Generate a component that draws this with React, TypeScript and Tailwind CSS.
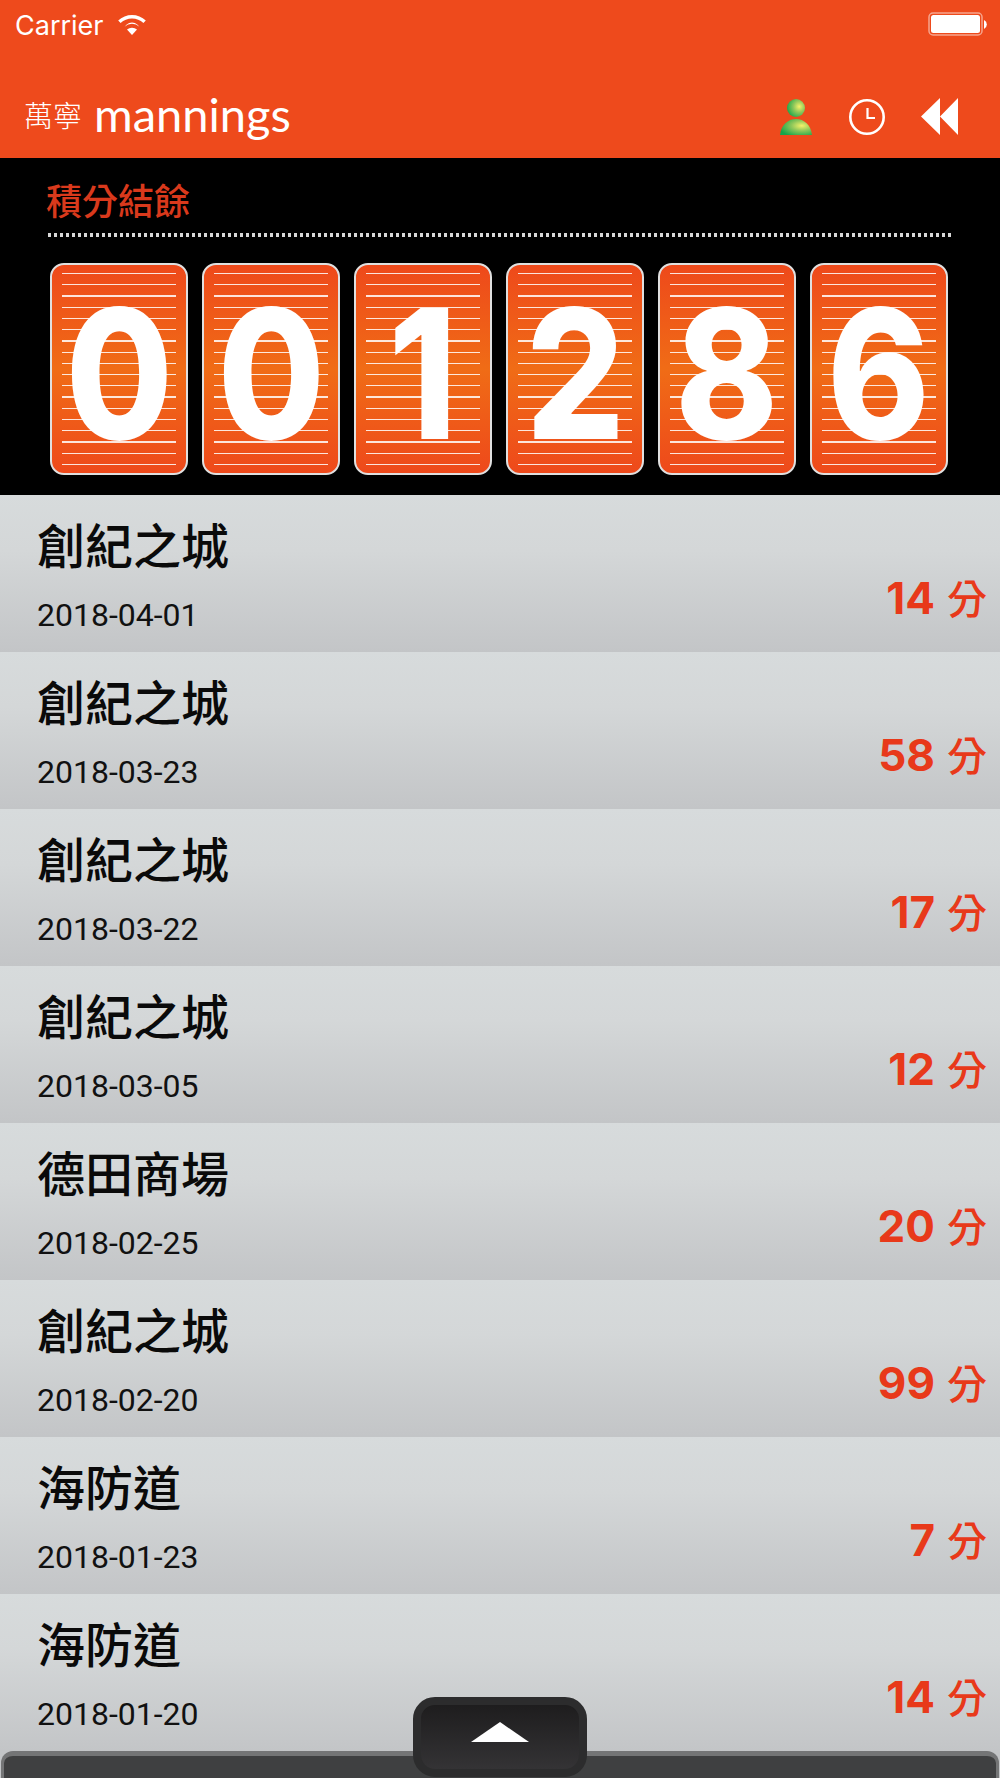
import React from "react";

const records = [
  { place: "創紀之城", date: "2018-04-01", points: 14 },
  { place: "創紀之城", date: "2018-03-23", points: 58 },
  { place: "創紀之城", date: "2018-03-22", points: 17 },
  { place: "創紀之城", date: "2018-03-05", points: 12 },
  { place: "德田商場", date: "2018-02-25", points: 20 },
  { place: "創紀之城", date: "2018-02-20", points: 99 },
  { place: "海防道", date: "2018-01-23", points: 7 },
  { place: "海防道", date: "2018-01-20", points: 14 },
];

const cjk = "font-['Noto_Sans_CJK_TC',sans-serif]";

function Wifi() {
  return (
    <svg width="28" height="21" viewBox="0 0 28 21" className="ml-[14px] mt-[-2px]">
      <path d="M14 21 L9 15.6 A7.4 7.4 0 0 1 19 15.6 Z" fill="#fff" />
      <path d="M6.6 13.1 A10.9 10.9 0 0 1 21.4 13.1 L19.3 10.8 A8 8 0 0 0 8.7 10.8 Z" fill="#fff" transform="translate(0 -0.4)" />
      <path d="M0.2 6.6 A20 20 0 0 1 27.8 6.6 L25.4 9 A16.4 16.4 0 0 0 2.6 9 Z" fill="#fff" />
    </svg>
  );
}

function Battery() {
  return (
    <svg width="60" height="26" viewBox="0 0 60 26">
      <rect x="1" y="1" width="53" height="22" rx="4" fill="none" stroke="#fff" strokeOpacity="0.5" strokeWidth="1.5" />
      <rect x="3" y="3" width="49" height="18" rx="2.5" fill="#fff" />
      <path d="M56 8 A5 5 0 0 1 56 17 Z" fill="#fff" />
    </svg>
  );
}

function Person() {
  return (
    <svg width="34" height="38" viewBox="0 0 34 38">
      <defs>
        <radialGradient id="skin" cx="0.68" cy="0.42" r="0.72">
          <stop offset="0" stopColor="#f4f26a" />
          <stop offset="0.45" stopColor="#8dc75a" />
          <stop offset="1" stopColor="#16a54a" />
        </radialGradient>
      </defs>
      <circle cx="17" cy="10" r="9" fill="url(#skin)" />
      <path d="M1 37 C2 27 9 21 17 21 C25 21 32 27 33 37 Z" fill="url(#skin)" />
    </svg>
  );
}

function Clock() {
  return (
    <svg width="38" height="38" viewBox="0 0 38 38">
      <circle cx="19" cy="19" r="16.7" fill="none" stroke="#fff" strokeWidth="2.6" />
      <path d="M19.5 10 V20 H27" fill="none" stroke="#fff" strokeWidth="2.2" />
    </svg>
  );
}

function Rewind() {
  return (
    <svg width="38" height="38" viewBox="0 0 38 38">
      <path d="M0 18.5 L19 0 V37 Z M19 18.5 L37 0 V37 Z" fill="#fff" />
    </svg>
  );
}

function DigitCard({ value }: { value: string }) {
  return (
    <div className="relative flex h-[212px] w-[138px] items-center justify-center rounded-[14px] border-2 border-[#e0e0e0] bg-[linear-gradient(180deg,#ee491b_0%,#f06c16_50%,#ee491b_100%)]">
      <div className="absolute inset-x-[10px] top-[8px] bottom-[8px] flex flex-col justify-between">
        {Array.from({ length: 18 }, (_, i) => (
          <div key={i} className="h-[1.25px] bg-white/85" />
        ))}
      </div>
      <span className="relative top-[5px] scale-x-[0.86] font-['Inter',sans-serif] text-[180px] leading-[180px] font-extrabold text-white">
        {value}
      </span>
    </div>
  );
}

function RecordRow({ place, date, points }: (typeof records)[number]) {
  return (
    <div className="relative h-[157px] shrink-0 bg-[linear-gradient(180deg,#d7dbdc_0%,#d4d7d8_35%,#c3c5c7_100%)] pl-[37px]">
      <div className={`${cjk} pt-[18px] text-[48px] leading-[60px] font-medium text-[#0a0a0a]`}>{place}</div>
      <div className="pt-[24px] font-['Roboto',sans-serif] text-[32px] leading-[36px] text-[#111]">{date}</div>
      <div className={`${cjk} absolute right-[13px] bottom-[29px] flex items-baseline gap-[12px] text-[#e8391a]`}>
        <span className="font-['Inter',sans-serif] text-[44px] leading-[50px] font-bold">{points}</span>
        <span className="text-[40px] leading-[50px] font-medium">分</span>
      </div>
    </div>
  );
}

export default function App() {
  return (
    <div className="relative flex h-[1778px] w-[1000px] flex-col overflow-hidden bg-[#c3c5c7]">
      <header className="h-[158px] shrink-0 bg-[#ee4a1c] text-white">
        <div className="flex h-[50px] items-center justify-between pr-[12px] pl-[15px]">
          <div className="flex items-center">
            <span className="font-['Inter',sans-serif] text-[27px] leading-none">Carrier</span>
            <Wifi />
          </div>
          <Battery />
        </div>
        <div className="flex h-[108px] items-start justify-between pr-[41px] pl-[24px]">
          <div className="flex items-center pt-[44px]">
            <span className="font-['Noto_Sans_CJK_TC',sans-serif] text-[29px] leading-[32px] font-light">萬寧</span>
            <span className="ml-[12px] font-['Lato',sans-serif] text-[47px] leading-[40px] font-normal">mannings</span>
          </div>
          <div className="flex items-center gap-[35px] pt-[48px]">
            <Person />
            <Clock />
            <Rewind />
          </div>
        </div>
      </header>

      <section className="h-[337px] shrink-0 bg-black px-[48px]">
        <h1 className={`${cjk} -ml-[2px] pt-[19px] text-[36px] leading-[44px] font-medium text-[#d9391c]`}>積分結餘</h1>
        <div className="mt-[12px] h-[4px] w-[904px] bg-[linear-gradient(90deg,#d8d8d8_50%,transparent_50%)] bg-[length:6px_4px]" />
        <div className="mt-[26px] ml-[2px] flex gap-[14px]">
          {"001286".split("").map((d, i) => (
            <DigitCard key={i} value={d} />
          ))}
        </div>
      </section>

      <main className="flex flex-col">
        {records.map((r, i) => (
          <RecordRow key={i} {...r} />
        ))}
      </main>

      {/* Collapsed drawer and its pull handle */}
      <div className="absolute inset-x-[1px] top-[1751px] h-[27px] rounded-t-[12px] border-x-[3px] border-t-[5px] border-[#747576] bg-[#3f4041]" />
      <button className="absolute top-[1697px] left-[413px] flex h-[80px] w-[174px] justify-center rounded-[22px] border-[8px] border-[#2c2c2d] bg-[linear-gradient(180deg,#1e1d1e_0%,#343335_100%)] pt-[17px]">
        <svg width="58" height="20" viewBox="0 0 58 20">
          <path d="M29 0 L58 20 H0 Z" fill="#fff" />
        </svg>
      </button>
    </div>
  );
}
